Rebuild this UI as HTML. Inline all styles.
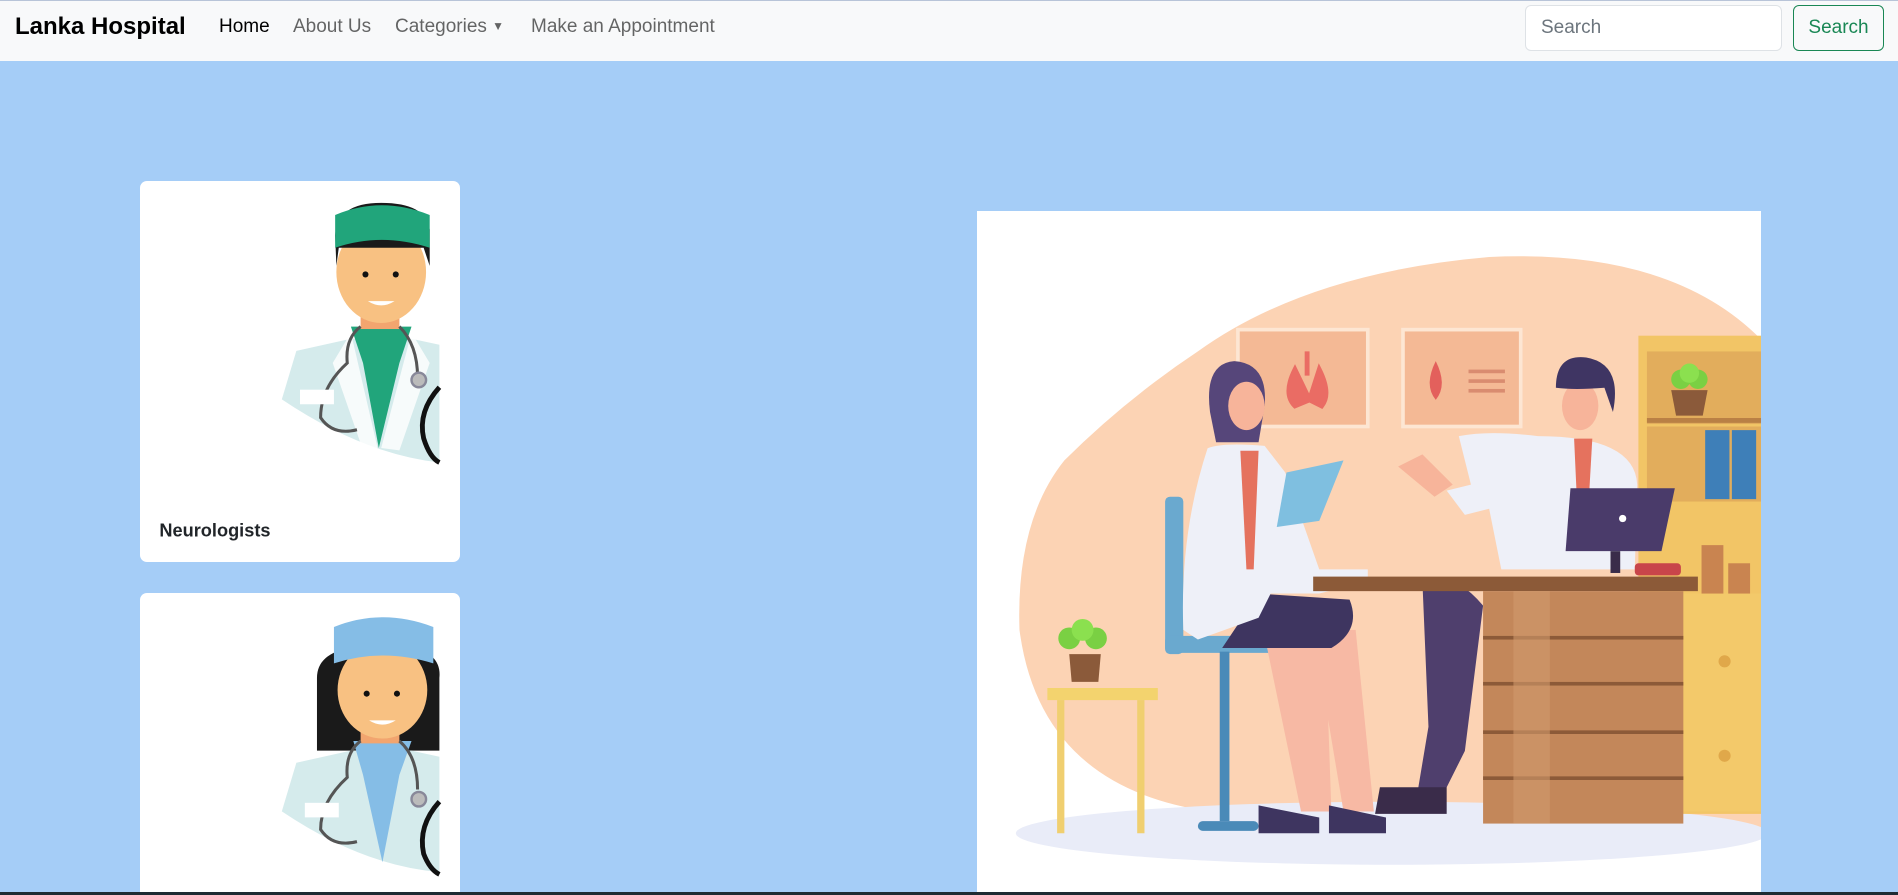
<!DOCTYPE html>
<html><head><meta charset="utf-8"><style>
*{box-sizing:border-box;margin:0;padding:0}
body{width:1898px;height:895px;overflow:hidden;background:#a5cdf7;font-family:"Liberation Sans",sans-serif;position:relative}
.nav{position:absolute;left:0;top:0;width:1898px;height:61px;background:#f8f9fa;border-top:1px solid #b8c4d8}
.brand{position:absolute;left:15px;top:12px;font-size:24px;font-weight:bold;color:#000}
.link{position:absolute;top:15px;font-size:19px;color:rgba(0,0,0,.6)}
.inp{position:absolute;left:1525px;top:4px;width:257px;height:46px;border:1px solid #dee2e6;border-radius:6px;background:#fff;font-size:19px;color:#6c757d;padding:11px 15px}
.btn{position:absolute;left:1793px;top:4px;width:91px;height:46px;border:1px solid #198754;border-radius:6px;color:#198754;font-size:19px;text-align:center;padding-top:11px}
.card{position:absolute;left:140px;width:320px;background:#fff;border-radius:7px;overflow:hidden}
.bottom{position:absolute;left:0;top:892px;width:1898px;height:3px;background:#1e2b33}
</style></head><body>
<div class="nav">
<div class="brand">Lanka Hospital</div>
<div class="link" style="left:219px;color:#000">Home</div>
<div class="link" style="left:293px">About Us</div>
<div class="link" style="left:395px">Categories <span style="font-size:12px;position:relative;top:-2px">▼</span></div>
<div class="link" style="left:531px">Make an Appointment</div>
<div class="inp">Search</div>
<div class="btn">Search</div>
</div>

<div class="card" style="top:181px;height:381px">
<svg width="320" height="381" viewBox="116 150 264 314" preserveAspectRatio="none">
<path d="M233 330 L245 290 L290 280 L340 280 L363 285 L363 382 Q300 375 233 330Z" fill="#d5ebec"/>
<path d="M290 270 L300 300 L313 370 L330 300 L340 270Z" fill="#21a57b"/>
<path d="M290 275 L312 370 L300 372 L275 300Z M340 275 L315 370 L330 372 L355 300Z" fill="#fff" opacity=".8"/>
<rect x="298" y="248" width="32" height="24" fill="#f2a56f"/>
<ellipse cx="315" cy="225" rx="37" ry="42" fill="#f8c182"/>
<path d="M277 195 Q278 168 315 168 Q352 168 355 190 L355 220 L350 205 L280 205 L278 220Z" fill="#1a1a1a"/>
<path d="M277 178 Q315 162 355 178 L355 205 Q315 192 277 205Z" fill="#21a57b"/>
<circle cx="302" cy="227" r="2.5" fill="#111"/><circle cx="327" cy="227" r="2.5" fill="#111"/>
<path d="M304 249 Q315 256 326 249Z" fill="#fff"/>
<path d="M298 270 Q285 280 287 300 Q265 320 265 345 Q275 360 295 355 M330 270 Q345 285 345 312" stroke="#555" stroke-width="2.5" fill="none"/>
<circle cx="346" cy="314" r="6" fill="#bbb" stroke="#889" stroke-width="2"/>
<path d="M363 320 Q345 340 350 362 Q355 378 363 382" stroke="#111" stroke-width="4" fill="none"/>
<rect x="248" y="322" width="28" height="12" fill="#fff"/>
<text x="132" y="443" font-family="Liberation Sans" font-weight="bold" font-size="15" fill="#212529">Neurologists</text>
</svg>
</div>

<div class="card" style="top:593px;height:302px;border-radius:7px 7px 0 0">
<svg width="320" height="302" viewBox="116 490 264 249" preserveAspectRatio="none">
<path d="M262 560 Q262 540 290 535 L340 535 Q365 540 363 560 L363 620 L262 620Z" fill="#1a1a1a"/>
<path d="M233 670 L245 630 L290 620 L340 620 L363 625 L363 720 Q300 715 233 670Z" fill="#d5ebec"/>
<path d="M292 612 L300 640 L316 712 L330 640 L340 612Z" fill="#85bde6"/>
<rect x="298" y="590" width="32" height="24" fill="#f2a56f"/>
<ellipse cx="316" cy="570" rx="37" ry="40" fill="#f8c182"/>
<path d="M276 518 Q316 502 358 518 L358 548 Q316 535 276 548Z" fill="#85bde6"/>
<circle cx="303" cy="573" r="2.5" fill="#111"/><circle cx="328" cy="573" r="2.5" fill="#111"/>
<path d="M305 595 Q316 602 327 595Z" fill="#fff"/>
<path d="M298 612 Q285 622 287 642 Q265 662 265 685 Q275 700 295 695 M330 612 Q345 625 345 652" stroke="#555" stroke-width="2.5" fill="none"/>
<circle cx="346" cy="660" r="6" fill="#bbb" stroke="#889" stroke-width="2"/>
<path d="M363 662 Q345 682 350 705 Q355 718 363 722" stroke="#111" stroke-width="4" fill="none"/>
<rect x="252" y="663" width="28" height="12" fill="#fff"/>
</svg>
</div>

<svg style="position:absolute;left:977px;top:211px" width="784" height="684" viewBox="808 174 646 565" preserveAspectRatio="none">
<rect x="808" y="174" width="646" height="565" fill="#fff"/>
<path d="M880 380 Q930 330 990 290 Q1080 225 1230 212 Q1380 205 1454 280 L1454 690 L1000 670 Q860 650 843 520 Q840 430 880 380Z" fill="#fcd3b4"/>
<ellipse cx="1150" cy="688" rx="310" ry="26" fill="#e9ecf8"/>
<rect x="1023" y="272" width="107" height="80" fill="#f4b995" stroke="#fde6d3" stroke-width="3"/>
<path d="M1080 290 L1080 310 M1070 305 Q1060 325 1070 335 L1082 330 Z M1090 305 Q1100 325 1092 335 L1082 330Z" stroke="#ea6c64" stroke-width="4" fill="#ea6c64"/>
<rect x="1159" y="272" width="97" height="80" fill="#f4b995" stroke="#fde6d3" stroke-width="3"/>
<path d="M1186 298 Q1176 318 1186 330 Q1196 318 1186 298Z" fill="#e3605c"/>
<rect x="1213" y="305" width="30" height="3" fill="#d98c70"/><rect x="1213" y="313" width="30" height="3" fill="#d98c70"/><rect x="1213" y="321" width="30" height="3" fill="#d98c70"/>
<rect x="1353" y="277" width="101" height="395" fill="#f2c566"/>
<rect x="1360" y="290" width="94" height="60" fill="#e2ad5c"/>
<rect x="1360" y="345" width="94" height="4" fill="#b98045"/>
<rect x="1360" y="352" width="94" height="62" fill="#e2ad5c"/>
<rect x="1408" y="355" width="20" height="57" fill="#3e7fb8"/><rect x="1430" y="355" width="20" height="57" fill="#3e7fb8"/>
<rect x="1390" y="490" width="64" height="180" fill="#f3c96a"/>
<circle cx="1424" cy="546" r="5" fill="#e0a84a"/><circle cx="1424" cy="624" r="5" fill="#e0a84a"/>
<path d="M1380 322 L1410 322 L1406 343 L1384 343Z" fill="#8b5a3a"/>
<circle cx="1388" cy="313" r="8" fill="#7ad043"/><circle cx="1402" cy="313" r="8" fill="#7ad043"/><circle cx="1395" cy="308" r="8" fill="#8be04f"/>
<path d="M866 568 L957 568 L957 578 L866 578Z" fill="#f3d36e"/>
<rect x="874" y="578" width="6" height="110" fill="#f0cf70"/><rect x="940" y="578" width="6" height="110" fill="#f0cf70"/>
<path d="M884 540 L910 540 L908 563 L886 563Z" fill="#8b5a3a"/>
<circle cx="884" cy="527" r="9" fill="#7ad043"/><circle cx="906" cy="527" r="9" fill="#7ad043"/><circle cx="895" cy="520" r="9" fill="#8be04f"/>
<rect x="963" y="410" width="15" height="130" rx="4" fill="#6aa9cf"/>
<rect x="963" y="525" width="100" height="14" rx="4" fill="#6aa9cf"/>
<rect x="1008" y="538" width="8" height="140" fill="#4a8ab8"/>
<rect x="990" y="678" width="50" height="8" rx="4" fill="#4a8ab8"/>
<path d="M1175 480 Q1200 470 1225 500 L1210 620 L1190 660 L1170 660 L1180 600Z" fill="#4f3f6d"/>
<path d="M1140 650 L1195 650 L1195 672 L1136 672Z" fill="#3a2c4a"/>
<path d="M1045 525 L1095 525 L1100 670 L1075 670Z M1085 520 L1120 520 L1135 670 L1110 670Z" fill="#f7b9a4"/>
<path d="M1040 665 L1090 675 L1090 688 L1040 688Z M1098 665 L1145 675 L1145 688 L1098 688Z" fill="#3e3560"/>
<path d="M1040 490 L1115 495 Q1125 520 1100 535 L1010 535Z" fill="#3e3560"/>
<path d="M998 370 Q1010 365 1045 368 L1062 390 L1090 470 L1130 470 L1130 480 L1090 490 L1050 490 L1040 510 L990 528 L978 520 Q975 440 998 370Z" fill="#eef0f8"/>
<path d="M1025 372 L1040 372 L1036 470 L1030 470Z" fill="#e5725e"/>
<path d="M1063 390 L1110 380 L1090 430 L1055 435Z" fill="#7fbfe0"/>
<path d="M1000 340 Q995 300 1020 298 Q1048 300 1045 335 L1040 365 L1005 365Z" fill="#56467a"/>
<ellipse cx="1030" cy="335" rx="15" ry="20" fill="#f7b49a"/>
<path d="M1205 360 Q1230 355 1270 360 Q1350 360 1352 400 L1350 470 L1240 470 L1230 420 L1210 425 L1195 405 L1215 400Z" fill="#eef0f8"/>
<path d="M1300 362 L1315 362 L1310 450 L1304 450Z" fill="#e5725e"/>
<path d="M1155 385 L1175 375 L1200 400 L1185 410Z" fill="#f7b49a"/>
<ellipse cx="1305" cy="335" rx="15" ry="20" fill="#f7b49a"/>
<path d="M1285 320 Q1285 292 1310 295 Q1340 300 1332 340 L1325 320Q1300 322 1285 320Z" fill="#3f3563"/>
<path d="M1297 403 L1383 403 L1372 455 L1293 455Z" fill="#4a3b6a"/>
<circle cx="1340" cy="428" r="3" fill="#fff"/>
<rect x="1330" y="455" width="8" height="18" fill="#3a2c4a"/>
<rect x="1350" y="465" width="38" height="10" rx="3" fill="#c8454a"/>
<rect x="1405" y="450" width="18" height="40" fill="#c98450"/><rect x="1427" y="465" width="18" height="25" fill="#c98450"/>
<rect x="1085" y="476" width="317" height="12" fill="#8c5a38"/>
<rect x="1225" y="488" width="165" height="192" fill="#c3875a"/>
<rect x="1225" y="525" width="165" height="3" fill="#8c5a38"/><rect x="1225" y="563" width="165" height="3" fill="#8c5a38"/>
<rect x="1225" y="603" width="165" height="3" fill="#8c5a38"/><rect x="1225" y="641" width="165" height="3" fill="#8c5a38"/>
<rect x="1250" y="488" width="30" height="192" fill="#d09a6c" opacity=".6"/>
</svg>
<div class="bottom"></div>
</body></html>
